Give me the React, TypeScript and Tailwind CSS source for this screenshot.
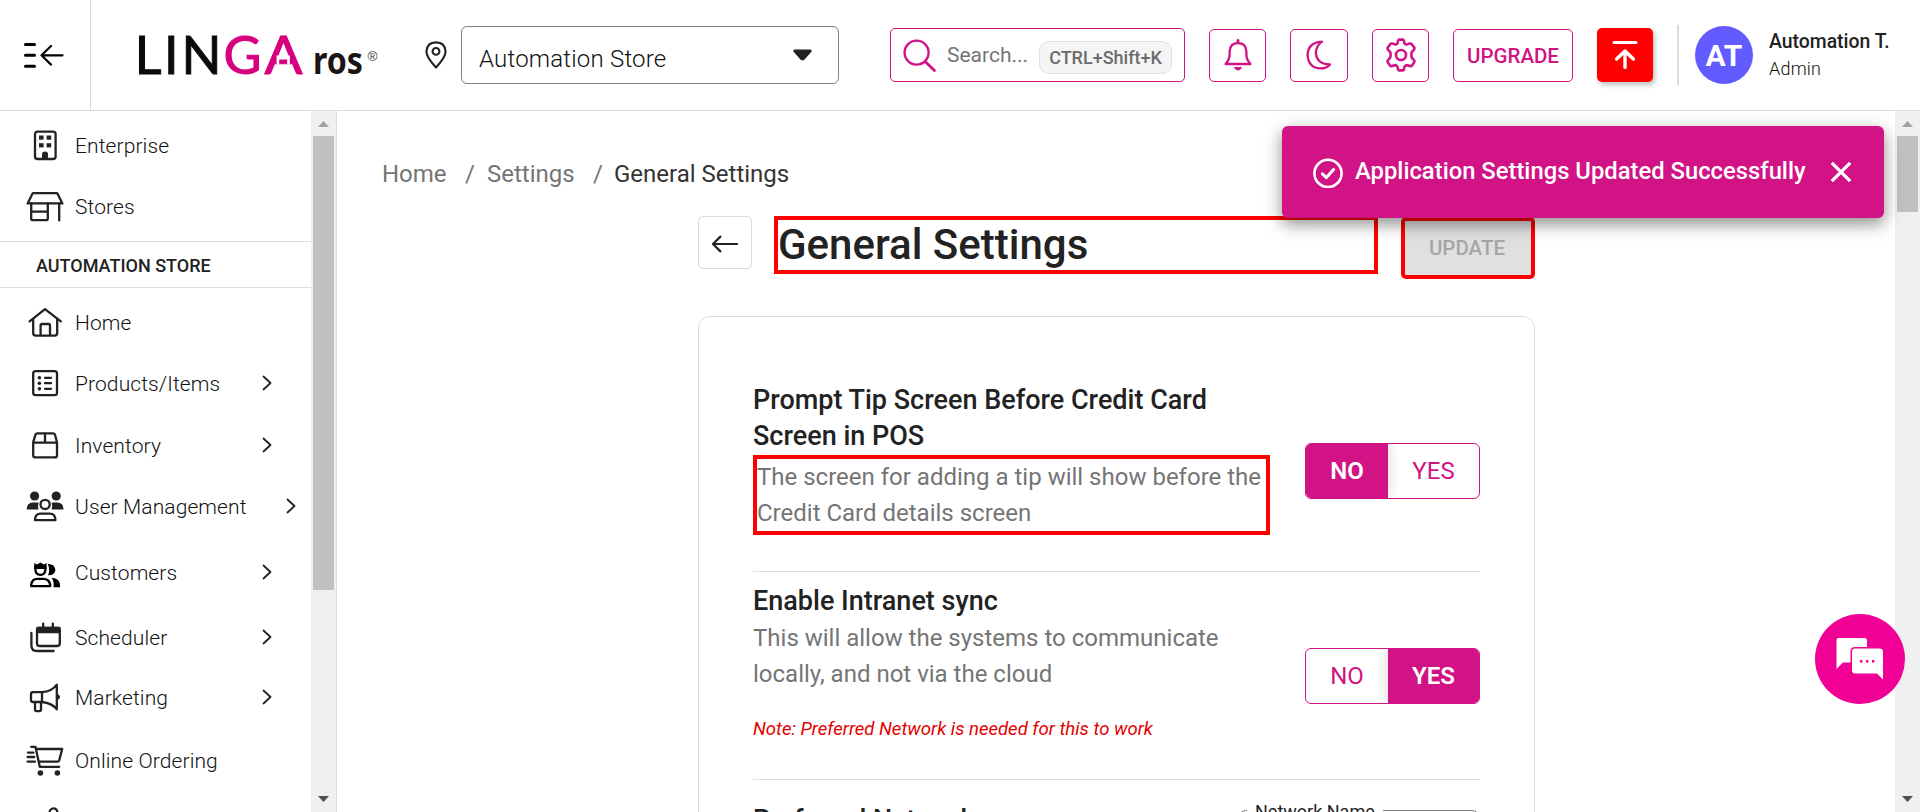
import React from "react";
import type { ReactNode } from "react";

function Svg({ children, w = 40, h = 32, sw = 2.3, className = "" }: { children: ReactNode; w?: number; h?: number; sw?: number; className?: string }) {
  return (
    <svg
      width={w}
      height={h}
      viewBox={`0 0 ${w} ${h}`}
      fill="none"
      stroke="currentColor"
      strokeWidth={sw}
      strokeLinecap="round"
      strokeLinejoin="round"
      className={`shrink-0 ${className}`}
    >
      {children}
    </svg>
  );
}

const icons: Record<string, ReactNode> = {
  enterprise: (
    <Svg>
      <rect x="10" y="1.6" width="20.6" height="27.4" rx="2.6" />
      <g fill="currentColor" stroke="none">
        <rect x="14" y="5.5" width="4.6" height="4.2" />
        <rect x="21.6" y="5.5" width="4.6" height="4.2" />
        <rect x="14" y="13.2" width="4.6" height="4.2" />
        <rect x="21.6" y="13.2" width="4.6" height="4.2" />
        <path d="M17 29v-5q0-2.6 3-2.6t3 2.6v5z" />
      </g>
    </Svg>
  ),
  stores: (
    <Svg>
      <path d="M8.5 2.2H31.5Q32.3 2.2 32.7 3L37.4 12.4H2.6L7.3 3Q7.7 2.2 8.5 2.2z" />
      <path d="M6.2 12.4V27.4Q6.2 29.2 8 29.2H21Q22.8 29.2 22.8 27.4V12.4M6.2 20.6H22.8M34.2 12.4V29.4" />
    </Svg>
  ),
  home: (
    <Svg>
      <path d="M4.6 14.4L20 2.2L35.8 14.4" />
      <path d="M8.2 12V26Q8.2 28.6 10.8 28.6H29.6Q32.2 28.6 32.2 26V12M15.6 28.4V18.4Q15.6 17 17 17H23.6Q25 17 25 18.4V28.4" />
    </Svg>
  ),
  products: (
    <Svg>
      <rect x="8.2" y="3.2" width="23.8" height="24" rx="2.4" />
      <path d="M20 9.8H26M20 15.2H26M20 20.8H26" />
      <g fill="currentColor" stroke="none">
        <circle cx="14.4" cy="9.8" r="1.8" />
        <circle cx="14.4" cy="15.2" r="1.8" />
        <circle cx="14.4" cy="20.8" r="1.8" />
      </g>
    </Svg>
  ),
  inventory: (
    <Svg>
      <path d="M12.4 3.4H27.8Q29.4 3.4 30 4.8L32 12.2V25.2Q32 27.4 29.8 27.4H10.4Q8.2 27.4 8.2 25.2V12.2L10.4 4.8Q11 3.4 12.4 3.4zM8.2 12.6H32M20 3.4V12.4" />
    </Svg>
  ),
  users: (
    <Svg>
      <g fill="currentColor" stroke="none">
        <circle cx="9.6" cy="5" r="4.6" />
        <circle cx="31.2" cy="5" r="4.6" />
        <path d="M1.6 18.6Q1.8 11.6 8 11.6H12.6Q13 11.6 13.6 12Q12.2 15.4 13.6 18.6z" />
        <path d="M38.6 18.6Q38.4 11.6 32.2 11.6H27.6Q27 11.6 26.6 12Q28 15.4 26.6 18.6z" />
      </g>
      <circle cx="20.1" cy="13.4" r="4.6" />
      <path d="M10 29.2Q10 22.6 15.6 22.6H24.8Q30.4 22.6 30.4 29.2z" />
    </Svg>
  ),
  customers: (
    <Svg className="text-black">
      <path d="M10.4 9.5V12.2Q10.4 17.8 15.4 17.8T20.4 12.2V9.5z" />
      <g fill="currentColor" stroke="none">
        <path d="M9.3 6L12 7.6L15.4 5.6L18.8 7.6L21.5 6V12H9.3z" />
        <path d="M22.8 7Q29.8 6.8 30.4 13Q29.8 18.4 23 18.2Q25.4 13 22.8 7z" />
        <path d="M26.6 20.8Q35.6 21 35.2 30.2H28.6Q29.2 24.4 26.6 20.8z" />
      </g>
      <path d="M6.2 29.2V28Q6.8 21.8 12.4 21.8H18.2Q24.4 21.8 25.2 28V29.2z" />
    </Svg>
  ),
  scheduler: (
    <Svg>
      <rect x="12" y="6" width="22.8" height="18" rx="2.4" />
      <path d="M12.4 5.8H34.4V10H12.4zM18.2 1.6V5M27.8 1.6V5" fill="currentColor" />
      <path d="M6.4 11V23.4Q6.4 29 12 29H28.6" />
    </Svg>
  ),
  marketing: (
    <Svg>
      <path d="M17 10.2H8Q6 10.2 6 12.2V18Q6 20 8 20H17zM17 10.2Q27 9.4 31.8 2.6V27.4Q27 21 17 20M10 20V27.6Q10 29.2 11.6 29.2H14.4Q16 29.2 16 27.6V20" />
      <path d="M32.4 12.6Q34.6 13 34.6 15T32.4 17.4z" fill="currentColor" strokeWidth="1" />
    </Svg>
  ),
  online: (
    <Svg>
      <path d="M6.2 1.8H10.4L14.8 21.8H34.2M11 4H37.2L34.2 15.4Q33.8 16.6 32.6 16.6H13.8M3 7.6H8.4M2.6 12H9.2M2.6 16.6H10" />
      <g fill="currentColor" stroke="none">
        <circle cx="15.4" cy="28" r="2.8" />
        <circle cx="32.4" cy="28" r="2.8" />
      </g>
    </Svg>
  ),
  gift: (
    <Svg>
      <path d="M24.4 8.6Q24 1.6 28.4 1.4T32.4 7.6M24.4 5.6L22.4 7.6" />
    </Svg>
  ),
};

function NavRow({ icon, label, height, chevron }: { icon: string; label: string; height: string; chevron?: string }) {
  return (
    <div className={`flex shrink-0 items-center pl-[25px] ${height}`}>
      {icons[icon]}
      <span className="ml-[10px] text-[21px] font-light leading-6 tracking-[0.1px] text-[#111] whitespace-nowrap">{label}</span>
      {chevron && (
        <Svg w={12} h={18} sw={1.8} className={`ml-auto -translate-y-px ${chevron}`}>
          <path d="M2.5 2.5L9.5 9L2.5 15.5" />
        </Svg>
      )}
    </div>
  );
}

function ScrollBar({ thumb }: { thumb: string }) {
  return (
    <div className="flex w-[25px] shrink-0 flex-col items-center bg-[#f0f0f0]">
      <svg width="11" height="6" viewBox="0 0 11 6" className="mt-[10px] mb-[9px] shrink-0" fill="#a3a3a3">
        <path d="M5.5 0L11 6H0z" />
      </svg>
      <div className={`w-[21px] shrink-0 bg-[#c1c1c1] ${thumb}`} />
      <svg width="11" height="6" viewBox="0 0 11 6" className="mt-auto mb-[10px] shrink-0" fill="#505050">
        <path d="M0 0H11L5.5 6z" />
      </svg>
    </div>
  );
}

function Toggle({ yes = false }: { yes?: boolean }) {
  const on = "bg-[#d11386] text-white font-semibold shadow-[0_0_12px_rgba(0,0,0,0.18)]";
  const off = "text-[#d11386] font-normal";
  return (
    <div className="flex h-14 w-[175px] overflow-hidden rounded-[6px] border border-[#d11386] text-[24px]">
      <div className={`flex w-[82px] items-center justify-center ${yes ? off : on}`}>NO</div>
      <div className={`flex flex-1 items-center justify-center ${yes ? on : off}`}>YES</div>
    </div>
  );
}

function HeaderButton({ children, className }: { children: ReactNode; className: string }) {
  return (
    <div className={`flex h-[53px] shrink-0 items-center justify-center rounded-[5px] border border-[#d11386] text-[#d11386] ${className}`}>
      {children}
    </div>
  );
}

function Header() {
  return (
    <header className="flex h-[111px] shrink-0 items-center border-b border-[#dcdcdc]">
      <div className="flex h-full w-[91px] shrink-0 items-center border-r border-[#dcdcdc] pl-6 text-black">
        <svg width="40" height="26" viewBox="0 0 40 26" fill="none" stroke="currentColor" strokeLinecap="round" strokeLinejoin="round">
          <path d="M1.5 2.5H10.5M1.5 13.3H10.5M1.5 24.3H10.5" strokeWidth="3" />
          <path d="M17.5 13.3H38.5M27 4L17.5 13.3L27 22.6" strokeWidth="2.2" />
        </svg>
      </div>
      <svg width="250" height="100" viewBox="0 0 250 100" className="ml-[44px] shrink-0">
        <g fontFamily="Lato" fontSize="52" strokeWidth="1">
          <g fill="#0a0a0a" stroke="#0a0a0a">
            <text x="-0.3" y="68.5">L</text>
            <text x="29" y="68.5">I</text>
            <text x="46.6" y="68.5" textLength="40" lengthAdjust="spacingAndGlyphs">N</text>
          </g>
          <g fill="#d6007f" stroke="#d6007f">
            <text x="88.4" y="68.5">G</text>
            <text x="129.4" y="68.5" textLength="38" lengthAdjust="spacingAndGlyphs">A</text>
          </g>
        </g>
        <path d="M141.6 50.5h2.6v9h-2.6zM152.2 50.5h2.6v9h-2.6z" fill="#fff" />
        <text x="178" y="68.5" fontFamily="Noto Sans" fontWeight="700" fontSize="37" textLength="50" lengthAdjust="spacingAndGlyphs" fill="#1a1414">ros</text>
        <text x="232.5" y="56" fontFamily="Liberation Sans" fontSize="13.5" fill="#3a3636">®</text>
      </svg>
      <Svg w={22} h={28} sw={2.1} className="ml-[40px] text-[#222]">
        <path d="M11 26.4Q1.4 16.5 1.4 10.6Q2 1.4 11 1.4T20.6 10.6Q20.6 16.5 11 26.4z" />
        <circle cx="11" cy="10.4" r="3.4" />
      </Svg>
      <div className="ml-[14px] flex h-[58px] w-[378px] shrink-0 items-center justify-between rounded-[6px] border border-[#7b808c] pl-[17px] pr-[26px]">
        <span className="pt-[8px] text-[24px] font-light tracking-[0.2px] text-[#111]">Automation Store</span>
        <svg width="19" height="12" viewBox="0 0 19 12" fill="#222">
          <path d="M1.6 .4H17.4Q19.6 1 18.2 3L11.6 10.4Q9.5 12.4 7.4 10.4L.8 3Q-.6 1 1.6 .4z" />
        </svg>
      </div>
      <div className="ml-[51px] flex h-[54px] w-[295px] shrink-0 items-center rounded-[5px] border border-[#d11386] pl-3">
        <Svg w={33} h={33} sw={2.4} className="text-[#d11386]">
          <circle cx="13.6" cy="13.6" r="12" />
          <path d="M22.2 22.4L31.4 31.4" strokeWidth="2.8" />
        </Svg>
        <span className="ml-[11px] mt-[2px] w-[92px] text-[21px] text-[#757575]">Search...</span>
        <span className="mt-1 flex h-[33px] w-[133px] items-center justify-center rounded-[10px] border border-[#e0e0e0] bg-[#f5f5f5] text-[18px] font-medium text-[#6b6b6b]">
          CTRL+Shift+K
        </span>
      </div>
      <HeaderButton className="ml-6 w-[57px]">
        <Svg w={28} h={32} sw={2.3}>
          <path d="M1.6 25H26.4Q22.4 20.5 22.4 16V12.6Q22 4.2 14 4.2T5.6 12.6V16Q5.6 20.5 1.6 25z" />
          <path d="M14 1.4V3" strokeWidth="2.8" />
          <path d="M10.6 28.6H17.4Q16.6 31 14 31T10.6 28.6z" fill="currentColor" strokeWidth="1" />
        </Svg>
      </HeaderButton>
      <HeaderButton className="ml-6 w-[58px]">
        <Svg w={26} h={30} sw={2.3}>
          <path d="M16 1.6Q2 2.4 1.6 15Q2.4 28 14.6 28.4Q20.6 28.4 24 24.4Q11.6 24.6 9.8 13.6Q9.8 6 16 1.6z" />
        </Svg>
      </HeaderButton>
      <HeaderButton className="ml-6 w-[57px]">
        <Svg w={32} h={34} sw={2.6}>
          <path d="M12.6 5.2Q13 1.6 14.2 1.6H17.8Q19 1.6 19.4 5.2Q20.2 6.8 22 6.4Q25.4 5 26.6 6L29.4 9.8Q29.8 11.2 27 13.8Q26.2 15 26.4 17Q26.4 19.4 27.4 20.4Q30 22.6 29.4 23.8L27 27.6Q25.8 28.8 22.4 27.2Q20.4 26.8 19.4 29Q19 32.4 17.8 32.4H14.2Q13 32.4 12.6 29Q11.6 26.8 9.6 27.2Q6.2 28.8 5 27.6L2.6 23.8Q2 22.6 4.6 20.4Q5.6 19.4 5.6 17Q5.8 15 5 13.8Q2.2 11.2 2.6 9.8L5.4 6Q6.6 5 10 6.4Q11.8 6.8 12.6 5.2z" />
          <circle cx="16" cy="17" r="5" />
        </Svg>
      </HeaderButton>
      <HeaderButton className="ml-6 w-[120px] pt-[2px] text-[20.5px] font-medium">UPGRADE</HeaderButton>
      <div className="ml-6 flex h-[54px] w-14 shrink-0 items-center justify-center rounded-[5px] bg-[#ff0000] text-white shadow-[2px_3px_5px_rgba(0,0,0,0.25)]">
        <Svg w={26} h={30} sw={3}>
          <path d="M2 2.4H24" />
          <path d="M13 27.4V11.4M4.6 19L13 11L21.4 19" strokeWidth="3.4" />
        </Svg>
      </div>
      <div className="ml-6 h-[60px] w-[2px] shrink-0 bg-[#dcdcdc]" />
      <div className="ml-4 flex size-[58px] shrink-0 items-center justify-center rounded-full bg-[#625bff] text-[30px] font-bold text-white">AT</div>
      <div className="ml-4 flex flex-col whitespace-nowrap">
        <span className="text-[19.4px] font-medium leading-[27px] text-[#222]">Automation T.</span>
        <span className="text-[18px] font-light leading-[27px] tracking-[0.2px] text-[#111]">Admin</span>
      </div>
    </header>
  );
}

function Sidebar() {
  return (
    <aside className="flex w-[337px] shrink-0 border-r border-[#dcdcdc]">
      <nav className="flex w-[311px] flex-col overflow-hidden pt-1 text-[#222]">
        <NavRow icon="enterprise" label="Enterprise" height="h-[61px]" />
        <NavRow icon="stores" label="Stores" height="h-[61px]" />
        <div className="mt-[4px] mb-[4px] flex h-[47px] shrink-0 items-center border-y border-[#dcdcdc] pl-9 pt-[2px] text-[18px] font-medium">
          AUTOMATION STORE
        </div>
        <NavRow icon="home" label="Home" height="h-[61px]" />
        <NavRow icon="products" label="Products/Items" height="h-[62px]" chevron="mr-[38px]" />
        <NavRow icon="inventory" label="Inventory" height="h-[61px]" chevron="mr-[38px]" />
        <NavRow icon="users" label="User Management" height="h-[61px]" chevron="mr-[14px]" />
        <NavRow icon="customers" label="Customers" height="h-[72px]" chevron="mr-[38px]" />
        <NavRow icon="scheduler" label="Scheduler" height="h-[57px]" chevron="mr-[38px]" />
        <NavRow icon="marketing" label="Marketing" height="h-[63px]" chevron="mr-[38px]" />
        <NavRow icon="online" label="Online Ordering" height="h-[63px]" />
        <NavRow icon="gift" label="" height="h-[61px]" />
      </nav>
      <ScrollBar thumb="h-[454px]" />
    </aside>
  );
}

function Content() {
  return (
    <main className="flex min-w-0 flex-1 flex-col overflow-hidden">
      <div className="mt-[46px] flex h-[34px] shrink-0 items-center pl-[45px] text-[24px] text-[#757575]">
        <span className="w-[83px]">Home</span>
        <span className="w-[22px]">/</span>
        <span className="w-[106px]">Settings</span>
        <span className="w-[21px]">/</span>
        <span className="text-[#333]">General Settings</span>
      </div>
      <div className="ml-[361px] mt-[25px] flex w-[837px] shrink-0 items-start">
        <div className="flex h-[53px] w-[54px] items-center justify-center rounded-[5px] border border-[#dcdcdc] text-[#222]">
          <Svg w={28} h={20} sw={2.2}>
            <path d="M2 11H26M9.4 3.6L2 11L9.4 18.4" />
          </Svg>
        </div>
        <h1 className="ml-[22px] flex h-[58px] w-[604px] items-center border-4 border-[#ff0000] text-[42px] font-medium leading-none text-[#222]">
          General Settings
        </h1>
        <button className="ml-[23px] mt-px flex h-[62px] w-[134px] items-center justify-center rounded-[5px] border-4 border-[#ff0000] bg-[#e0e0e0] pr-[2px] pt-px text-[20.5px] font-medium text-[#a6a6a6]">
          UPDATE
        </button>
      </div>
      <section className="ml-[361px] mt-[37px] flex h-[700px] w-[837px] shrink-0 flex-col rounded-t-[12px] border border-[#dcdcdc] px-[54px]">
        <div className="flex h-[255px] shrink-0 border-b border-[#dcdcdc] pt-[65px]">
          <div className="w-[517px]">
            <h2 className="text-[27px] font-medium leading-9 text-[#222] whitespace-nowrap">
              Prompt Tip Screen Before Credit Card
              <br />
              Screen in POS
            </h2>
            <p className="mt-px h-20 border-4 border-[#ff0000] text-[24px] leading-9 whitespace-nowrap text-[#757575]">
              The screen for adding a tip will show before the
              <br />
              Credit Card details screen
            </p>
          </div>
          <div className="ml-auto mt-[61px]">
            <Toggle />
          </div>
        </div>
        <div className="flex h-[208px] shrink-0 border-b border-[#dcdcdc] pt-[11px]">
          <div className="w-[517px]">
            <h2 className="text-[27px] font-medium leading-9 text-[#222]">Enable Intranet sync</h2>
            <p className="mt-px text-[24px] leading-9 text-[#757575]">
              This will allow the systems to communicate
              <br />
              locally, and not via the cloud
            </p>
            <p className="mt-[21px] text-[18.55px] italic leading-8 text-[#e60000]">Note: Preferred Network is needed for this to work</p>
          </div>
          <div className="ml-auto mt-[65px]">
            <Toggle yes />
          </div>
        </div>
        <div className="flex shrink-0 pt-[20px]">
          <h2 className="pt-[2px] text-[27px] font-medium leading-9 text-[#222]">Preferred Network</h2>
          <fieldset className="ml-auto h-16 w-[242px] rounded-[8px] border border-[#7b808c] pl-[8px]">
            <legend className="px-2 pt-[3px] text-[18px] leading-[17px] text-[#222]">Network Name</legend>
          </fieldset>
        </div>
      </section>
    </main>
  );
}

export default function App() {
  return (
    <div className="relative flex h-[812px] w-[1920px] flex-col overflow-hidden bg-white font-['Roboto',sans-serif]">
      <Header />
      <div className="flex min-h-0 flex-1">
        <Sidebar />
        <Content />
        <ScrollBar thumb="h-[76px]" />
      </div>

      <div className="absolute left-[1282px] top-[126px] flex h-[92px] w-[602px] items-center rounded-[6px] bg-[#d11386] pl-[31px] text-white shadow-[0_6px_24px_rgba(0,0,0,0.16),0_6px_14px_rgba(0,0,0,0.32)]">
        <Svg w={30} h={32} sw={2.6}>
          <circle cx="15" cy="17.4" r="13.6" />
          <path d="M9.4 17.8L13.4 21.6L20.6 13.6" strokeWidth="3" />
        </Svg>
        <span className="ml-3 w-[450px] text-[23.8px] font-medium whitespace-nowrap">Application Settings Updated Successfully</span>
        <Svg w={22} h={22} sw={3.2} className="ml-[25px]">
          <path d="M1.8 1.8L20.2 20.2M20.2 1.8L1.8 20.2" strokeLinecap="butt" />
        </Svg>
      </div>

      <div className="absolute left-[1815px] top-[614px] flex size-[90px] items-center justify-center rounded-full bg-[#f10096]">
        <svg width="48" height="44" viewBox="0 0 48 44" fill="#fff">
          <path d="M2.5 1H28.5Q31 1 31 3.5V10H19Q14.5 10 14.5 14.5V25.5H7L.5 32V3Q.5 1 2.5 1z" />
          <path d="M19 11.6H43.5Q47 11.6 47 15V42.6L41 36.6H19.4Q16 36.6 16 33.2V15Q16 11.6 19 11.6z" />
          <g fill="#f10096">
            <rect x="24" y="23" width="2.4" height="2.6" />
            <rect x="30" y="23" width="2.4" height="2.6" />
            <rect x="36" y="23" width="2.4" height="2.6" />
          </g>
        </svg>
      </div>
    </div>
  );
}
